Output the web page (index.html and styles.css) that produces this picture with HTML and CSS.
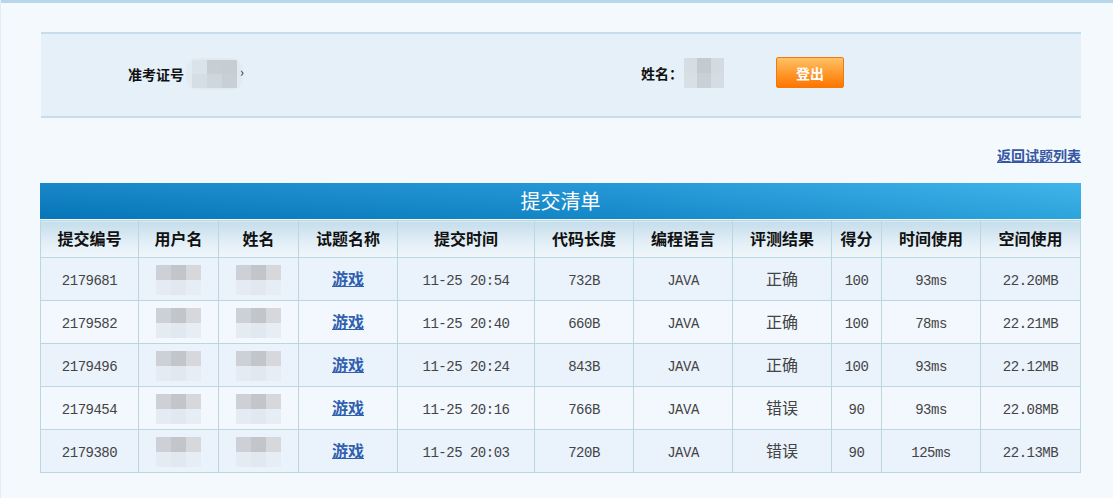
FILE: index.html
```html
<!DOCTYPE html>
<html lang="zh">
<head>
<meta charset="utf-8">
<title>提交清单</title>
<link rel="stylesheet" href="styles.css">
</head>
<body>
<div class="topbar"></div>
<div class="wrap">
  <div class="userpanel">
    <div class="field field-id">
      <span class="label">准考证号</span>
      <span class="mosaic m-id"><i></i><i></i><i></i><i></i><i></i><i></i></span>
      <span class="caret">›</span>
    </div>
    <div class="field field-name">
      <span class="label">姓名：</span>
      <span class="mosaic m-name"><i></i><i></i><i></i><i></i><i></i><i></i></span>
      <button class="logout">登出</button>
    </div>
  </div>
  <div class="backrow"><a href="#" class="back">返回试题列表</a></div>
  <div class="titlebar">提交清单</div>
  <table class="list">
    <colgroup>
      <col class="c98"><col class="c80"><col class="c80"><col class="c99"><col class="c137"><col class="c99"><col class="c99"><col class="c99"><col class="c50"><col class="c99"><col class="c100">
    </colgroup>
    <thead>
      <tr><th>提交编号</th><th>用户名</th><th>姓名</th><th>试题名称</th><th>提交时间</th><th>代码长度</th><th>编程语言</th><th>评测结果</th><th>得分</th><th>时间使用</th><th>空间使用</th></tr>
    </thead>
    <tbody>
      <tr class="odd"><td class="num">2179681</td><td><span class="mosaic m-cell"><i></i><i></i><i></i><i></i><i></i><i></i></span></td><td><span class="mosaic m-cell"><i></i><i></i><i></i><i></i><i></i><i></i></span></td><td class="zh"><a href="#" class="prob">游戏</a></td><td class="num">11-25 20:54</td><td class="num">732B</td><td class="num">JAVA</td><td class="zh">正确</td><td class="num">100</td><td class="num">93ms</td><td class="num">22.20MB</td></tr>
      <tr class="even"><td class="num">2179582</td><td><span class="mosaic m-cell"><i></i><i></i><i></i><i></i><i></i><i></i></span></td><td><span class="mosaic m-cell"><i></i><i></i><i></i><i></i><i></i><i></i></span></td><td class="zh"><a href="#" class="prob">游戏</a></td><td class="num">11-25 20:40</td><td class="num">660B</td><td class="num">JAVA</td><td class="zh">正确</td><td class="num">100</td><td class="num">78ms</td><td class="num">22.21MB</td></tr>
      <tr class="odd"><td class="num">2179496</td><td><span class="mosaic m-cell"><i></i><i></i><i></i><i></i><i></i><i></i></span></td><td><span class="mosaic m-cell"><i></i><i></i><i></i><i></i><i></i><i></i></span></td><td class="zh"><a href="#" class="prob">游戏</a></td><td class="num">11-25 20:24</td><td class="num">843B</td><td class="num">JAVA</td><td class="zh">正确</td><td class="num">100</td><td class="num">93ms</td><td class="num">22.12MB</td></tr>
      <tr class="even"><td class="num">2179454</td><td><span class="mosaic m-cell"><i></i><i></i><i></i><i></i><i></i><i></i></span></td><td><span class="mosaic m-cell"><i></i><i></i><i></i><i></i><i></i><i></i></span></td><td class="zh"><a href="#" class="prob">游戏</a></td><td class="num">11-25 20:16</td><td class="num">766B</td><td class="num">JAVA</td><td class="zh">错误</td><td class="num">90</td><td class="num">93ms</td><td class="num">22.08MB</td></tr>
      <tr class="odd"><td class="num">2179380</td><td><span class="mosaic m-cell"><i></i><i></i><i></i><i></i><i></i><i></i></span></td><td><span class="mosaic m-cell"><i></i><i></i><i></i><i></i><i></i><i></i></span></td><td class="zh"><a href="#" class="prob">游戏</a></td><td class="num">11-25 20:03</td><td class="num">720B</td><td class="num">JAVA</td><td class="zh">错误</td><td class="num">90</td><td class="num">125ms</td><td class="num">22.13MB</td></tr>
    </tbody>
  </table>
</div>
</body>
</html>
```
FILE: styles.css
```css
html, body {
  margin: 0;
  padding: 0;
}
body {
  background: #f3f9fd;
  font-family: "Noto Sans CJK SC", "Liberation Sans", sans-serif;
  color: #222;
  border-left: 1px solid #e2eef6;
  min-height: 498px;
  box-sizing: border-box;
}
.topbar {
  height: 3px;
  background: #b6d7eb;
}
.wrap {
  margin-left: 39px;
  width: 1041px;
}
.userpanel {
  margin-top: 29px;
  margin-left: 1px;
  height: 82px;
  background: #e5f0f8;
  border-top: 2px solid #c6deec;
  border-bottom: 2px solid #c8dde9;
  display: flex;
  align-items: center;
  padding-left: 87px;
  box-sizing: content-box;
}
.field {
  display: flex;
  align-items: center;
}
.field-id {
  width: 513px;
  margin-top: -2px;
}
.label {
  font-size: 14px;
  font-weight: bold;
  color: #111;
}
.mosaic {
  display: inline-grid;
  grid-template-columns: repeat(3, 1fr);
  grid-template-rows: 1fr 1fr;
}
.mosaic i {
  display: block;
}
.m-id {
  width: 45px;
  height: 28px;
  margin-left: 2px;
  padding: 2px 6px;
  border-radius: 12px;
  background: #e2ebf2;
}
.m-id i:nth-child(1) { background: #dbe3ea; }
.m-id i:nth-child(2) { background: #c7ced4; }
.m-id i:nth-child(3) { background: #c6cdd3; }
.m-id i:nth-child(4) { background: #d6dee5; }
.m-id i:nth-child(5) { background: #cfd7de; }
.m-id i:nth-child(6) { background: #c8cfd6; }
.caret {
  font-size: 13px;
  color: #333;
  margin-left: -3px;
  margin-top: -6px;
}
.field-name {
  margin-top: -4px;
}
.m-name {
  width: 40px;
  height: 30px;
  margin-left: 1px;
  border-radius: 14px 14px 0 0;
  background: #d9e1e8;
}
.m-name i:nth-child(1) { background: #d6dde3; }
.m-name i:nth-child(2) { background: #c3cad0; }
.m-name i:nth-child(3) { background: #d3dae1; }
.m-name i:nth-child(4) { background: #d8dfe5; }
.m-name i:nth-child(5) { background: #c9d0d7; }
.m-name i:nth-child(6) { background: #d5dce3; }
.logout {
  margin-left: 52px;
  width: 68px;
  height: 31px;
  border: 1px solid #f07a10;
  border-radius: 2px;
  background: linear-gradient(#ffc266, #ff9a2e 50%, #ff7500);
  color: #fff;
  font-family: "Noto Sans CJK SC", sans-serif;
  font-size: 14px;
  font-weight: bold;
  padding: 0;
  margin-top: -1px;
}
.backrow {
  display: flex;
  justify-content: flex-end;
  height: 65px;
  align-items: flex-start;
  padding-top: 27px;
  box-sizing: border-box;
}
.back {
  font-size: 14px;
  font-weight: bold;
  color: #3557a3;
  text-decoration: underline;
  line-height: 20px;
}
.titlebar {
  height: 36px;
  background:
    linear-gradient(rgba(255,255,255,0.08), rgba(0,0,0,0.06)),
    linear-gradient(90deg, #067dc3, #1590d4 55%, #30aee9);
  color: #fff;
  text-align: center;
  font-size: 20px;
  line-height: 36px;
  width: 1041px;
}
.list {
  border-collapse: collapse;
  table-layout: fixed;
  width: 1041px;
  margin-top: 1px;
  line-height: 20px;
}
.c98 { width: 98px; }
.c80 { width: 80px; }
.c99 { width: 99px; }
.c137 { width: 137px; }
.c50 { width: 50px; }
.c100 { width: 100px; }
.list th, .list td {
  border: 1px solid #bcd6dd;
  text-align: center;
  padding: 0;
  vertical-align: middle;
  box-sizing: border-box;
}
.list th {
  height: 37px;
  font-size: 16px;
  font-weight: bold;
  color: #111;
  background: linear-gradient(#c5ddeb, #e3eff7 60%, #f1f7fb);
  padding-bottom: 3px;
}
.list td {
  height: 43px;
  color: #444;
}
.list tr.odd td { background: #eaf2fc; }
.list tr.even td { background: #f2f8fe; }
.list td.num {
  font-family: "Liberation Mono", "DejaVu Sans Mono", monospace;
  font-size: 14px;
  letter-spacing: -0.5px;
  padding-top: 3px;
}
.list td.zh {
  font-size: 16px;
  padding-bottom: 3px;
}
.prob {
  font-size: 16px;
  font-weight: bold;
  color: #2f5fae;
  text-decoration: underline;
}
.m-cell {
  width: 45px;
  height: 30px;
  vertical-align: middle;
  margin-top: 2px;
}
.m-cell i:nth-child(1) { background: #cdd0d6; }
.m-cell i:nth-child(2) { background: #c2c5ca; }
.m-cell i:nth-child(3) { background: #d6d8dc; }
.m-cell i:nth-child(4) { background: #e4ebf3; }
.m-cell i:nth-child(5) { background: #e1e8f0; }
.m-cell i:nth-child(6) { background: #e6edf5; }
```
